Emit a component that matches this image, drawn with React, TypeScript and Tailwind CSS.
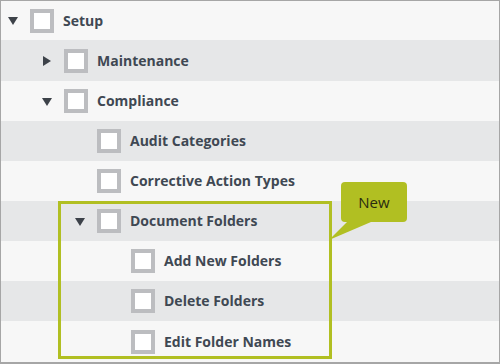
import React from "react";

type Row = { label: string; level: number; arrow?: "down" | "right"; h: string; bg: string };

const rows: Row[] = [
  { label: "Setup", level: 0, arrow: "down", h: "h-[39px]", bg: "bg-[#f7f7f7]" },
  { label: "Maintenance", level: 1, arrow: "right", h: "h-[41px]", bg: "bg-[#e6e7e8]" },
  { label: "Compliance", level: 1, arrow: "down", h: "h-[40px]", bg: "bg-[#f7f7f7]" },
  { label: "Audit Categories", level: 2, h: "h-[40px]", bg: "bg-[#e6e7e8]" },
  { label: "Corrective Action Types", level: 2, h: "h-[40px]", bg: "bg-[#f7f7f7]" },
  { label: "Document Folders", level: 2, arrow: "down", h: "h-[40px]", bg: "bg-[#e6e7e8]" },
  { label: "Add New Folders", level: 3, h: "h-[40px]", bg: "bg-[#f7f7f7]" },
  { label: "Delete Folders", level: 3, h: "h-[40px]", bg: "bg-[#e6e7e8]" },
  { label: "Edit Folder Names", level: 3, h: "h-[41px]", bg: "bg-[#f7f7f7]" },
];

const pads = ["pl-[7px]", "pl-[41px]", "pl-[74px]", "pl-[108px]"];

function Arrow({ dir }: { dir?: "down" | "right" }) {
  return (
    <div className="w-[22px] h-full flex items-center shrink-0">
      {dir === "down" && (
        <svg width="10" height="8" viewBox="0 0 10 8" className="mt-[1px]">
          <polygon points="0,0 10,0 5,8" fill="#3d4249" />
        </svg>
      )}
      {dir === "right" && (
        <svg width="8" height="10" viewBox="0 0 8 10" className="ml-[1px]">
          <polygon points="0,0 8,5 0,10" fill="#3d4249" />
        </svg>
      )}
    </div>
  );
}

export default function App() {
  return (
    <div className="relative w-[500px] h-[364px] border-t border-l border-r border-b-2 border-[#a6a6a6] bg-white overflow-hidden" style={{ fontFamily: '"Open Sans", "Noto Sans", sans-serif' }}>
      <div className="flex flex-col">
        {rows.map((r) => (
          <div key={r.label} className={`flex items-center ${r.h} ${r.bg} ${pads[r.level]}`}>
            <Arrow dir={r.arrow} />
            <div className="w-6 h-6 border-4 border-[#bcbdc0] bg-white shrink-0" />
            <span className="ml-[9px] text-[14px] font-bold text-[#3f4853] leading-none">{r.label}</span>
          </div>
        ))}
      </div>
      <div className="absolute left-[57px] top-[200px] w-[274px] h-[158px] border-[3px] border-[#b1bf22]" />
      <svg className="absolute left-[320px] top-[210px]" width="60" height="40" viewBox="0 0 60 40">
        <polygon points="26,11 50,11 8,29" fill="#b1bf22" />
      </svg>
      <div className="absolute left-[340px] top-[181px] w-[66px] h-[40px] rounded-[4px] bg-[#b1bf22] flex items-center justify-center text-[15px] text-[#2a2c10]">
        New
      </div>
    </div>
  );
}
